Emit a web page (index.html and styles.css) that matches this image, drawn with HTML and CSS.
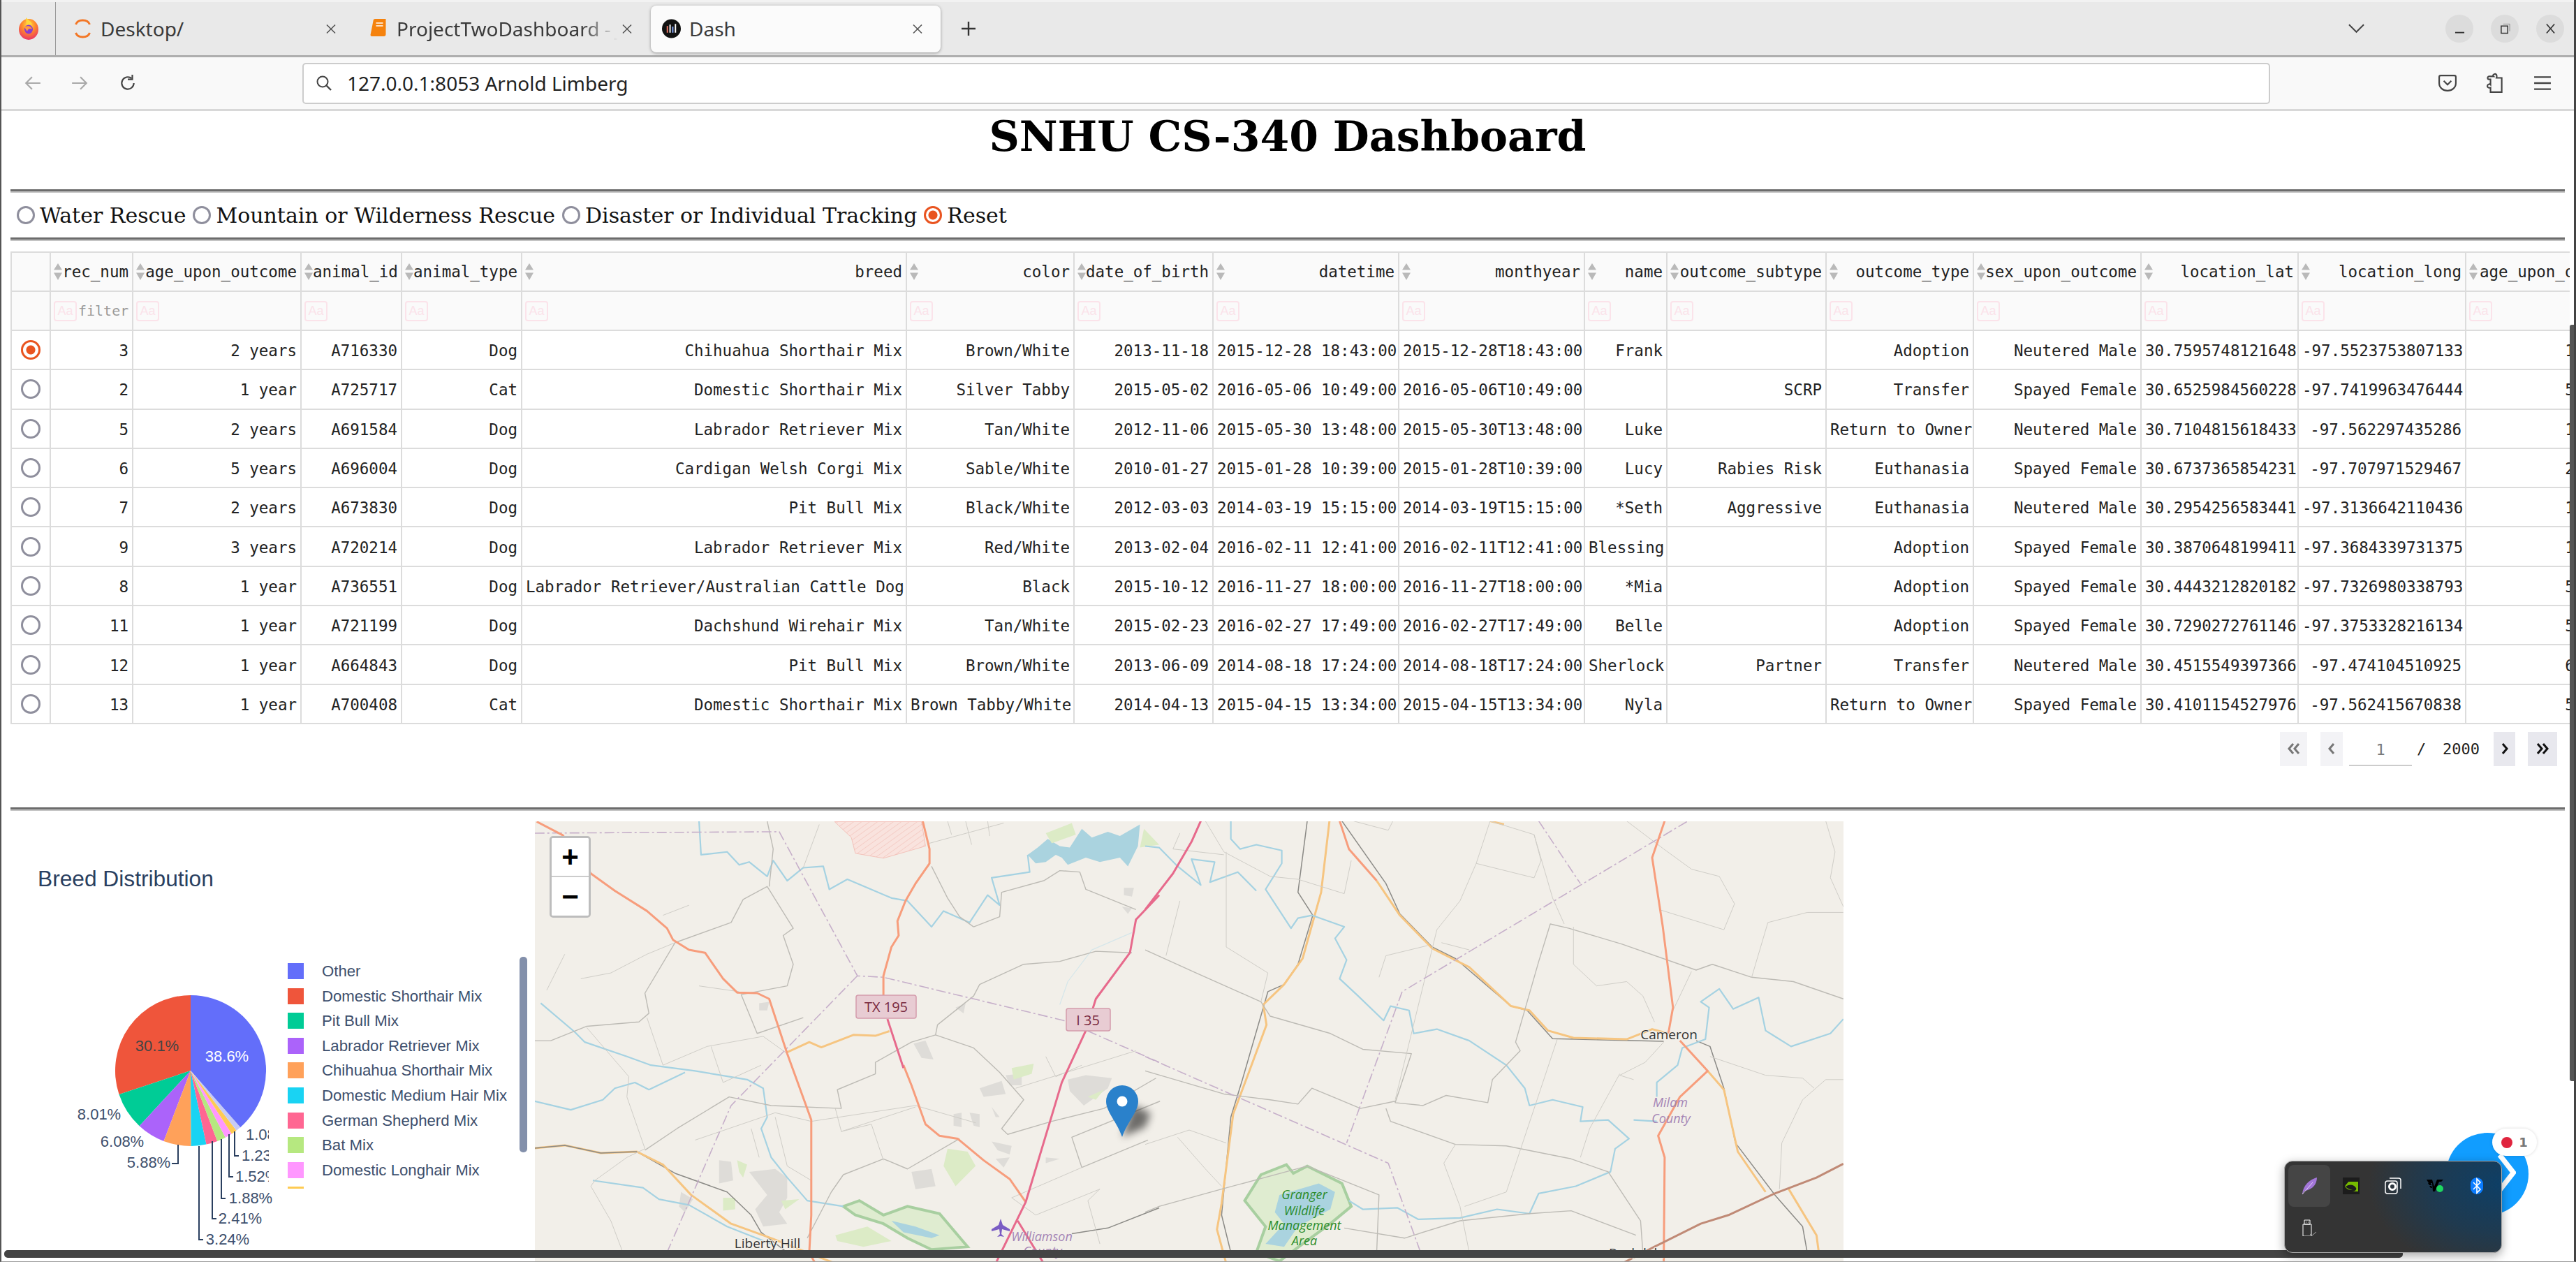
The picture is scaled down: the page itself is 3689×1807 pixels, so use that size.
FILE: index.html
```html
<!DOCTYPE html>
<html lang="en">
<head>
<meta charset="utf-8">
<title>Dash</title>
<link rel="stylesheet" href="styles.css">
</head>
<body>
<div class="window">
  <header class="tabbar">
    <div class="ff-cell">
      <svg class="ico-ff" viewBox="0 0 30 32"><defs><radialGradient id="ffg" cx="50%" cy="30%" r="75%"><stop offset="0" stop-color="#ffe14d"/><stop offset=".45" stop-color="#ff8a2b"/><stop offset="1" stop-color="#e8286e"/></radialGradient></defs><ellipse cx="15" cy="17" rx="14" ry="15" fill="url(#ffg)"/><path d="M11 0c3 3 8 6 9 10l-8 1z" fill="#ffd83a"/><ellipse cx="15" cy="17" rx="6" ry="6.5" fill="#8a3bd0"/><path d="M9 14c4-3 10-2 11 3-3-2-6-1-7 3z" fill="#ff9a3d"/></svg>
    </div>
    <div class="tab tab-a">
      <svg class="ico-tab" viewBox="0 0 26 30"><path d="M3 9C6 1 20 1 23 9" fill="none" stroke="#f37726" stroke-width="3"/><path d="M3 21c3 8 17 8 20 0" fill="none" stroke="#f37726" stroke-width="3"/></svg>
      <span class="tab-title">Desktop/</span>
      <svg class="ico-x" viewBox="0 0 14 14"><path d="M1 1l12 12M13 1L1 13" stroke="#555" stroke-width="1.6"/></svg>
    </div>
    <div class="tab tab-b">
      <svg class="ico-tab" viewBox="0 0 26 30"><path d="M5 4q0-3 3-3h15v22q0 3-3 3H3q-2 0 -2-2z" fill="#f5820d"/><path d="M9 7h10M9 11h10" stroke="#fff" stroke-width="1.6"/></svg>
      <span class="tab-title tab-fade">ProjectTwoDashboard - JupyterLab</span>
      <svg class="ico-x" viewBox="0 0 14 14"><path d="M1 1l12 12M13 1L1 13" stroke="#555" stroke-width="1.6"/></svg>
    </div>
    <div class="tab tab-c">
      <svg class="ico-tab" viewBox="0 0 28 30"><circle cx="14" cy="15" r="14" fill="#111"/><path d="M8 11v10" stroke="#e76" stroke-width="2"/><path d="M12 9v12" stroke="#fff" stroke-width="2"/><path d="M16 12v9" stroke="#8af" stroke-width="2"/><path d="M20 8v13" stroke="#fff" stroke-width="2"/></svg>
      <span class="tab-title">Dash</span>
      <svg class="ico-x" viewBox="0 0 14 14"><path d="M1 1l12 12M13 1L1 13" stroke="#555" stroke-width="1.6"/></svg>
    </div>
    <svg class="ico-plus" viewBox="0 0 24 24"><path d="M12 2v20M2 12h20" stroke="#333" stroke-width="2.4"/></svg>
    <svg class="ico-chev" viewBox="0 0 24 14"><path d="M1 1l11 11L23 1" fill="none" stroke="#444" stroke-width="2"/></svg>
    <div class="winbtn winbtn-first"><svg viewBox="0 0 16 16"><path d="M1 14h14" stroke="#333" stroke-width="2"/></svg></div>
    <div class="winbtn"><svg viewBox="0 0 16 16"><rect x="2" y="4" width="10" height="11" fill="none" stroke="#333" stroke-width="1.6"/><path d="M5 1h10v11" fill="none" stroke="#888" stroke-width="1"/></svg></div>
    <div class="winbtn"><svg viewBox="0 0 16 16"><path d="M2 1l12 14M14 1L2 15" stroke="#333" stroke-width="1.8"/></svg></div>
  </header>

  <nav class="navbar">
    <svg class="ico-nav nav-back" viewBox="0 0 24 24"><path d="M22 12H3M11 4l-8 8 8 8" fill="none" stroke="#a9a9a9" stroke-width="2"/></svg>
    <svg class="ico-nav nav-fwd" viewBox="0 0 24 24"><path d="M2 12h19M13 4l8 8-8 8" fill="none" stroke="#a9a9a9" stroke-width="2"/></svg>
    <svg class="ico-nav nav-reload" viewBox="0 0 24 24"><path d="M20 12a8 8 0 1 1-3-6.3" fill="none" stroke="#444" stroke-width="2"/><path d="M18 1v6h-6" fill="none" stroke="#444" stroke-width="2"/></svg>
    <div class="urlbar">
      <svg class="ico-search" viewBox="0 0 24 24"><circle cx="10" cy="10" r="7.5" fill="none" stroke="#444" stroke-width="2"/><path d="M15.5 15.5L22 22" stroke="#444" stroke-width="2.4"/></svg>
      <span class="url-text">127.0.0.1:8053 Arnold Limberg</span>
    </div>
    <svg class="ico-nav nav-pocket" viewBox="0 0 24 24"><path d="M3 2h18q2 0 2 2v8c0 6-5 10-11 10S1 18 1 12V4q0-2 2-2z" fill="none" stroke="#444" stroke-width="2"/><path d="M7 9l5 5 5-5" fill="none" stroke="#444" stroke-width="2"/></svg>
    <svg class="ico-nav nav-puzzle" viewBox="0 0 24 28"><path d="M11 2c3-1 4 2 3 5h7v19H6v-6c-3 1-5-1-4-3s3-2 4-1v-7h-2c-3 0-2-5 1-4h5c-1-1-1-2 1-3z" fill="none" stroke="#444" stroke-width="2"/></svg>
    <svg class="ico-nav nav-menu" viewBox="0 0 24 24"><path d="M1 4h22M1 12h22M1 20h22" stroke="#444" stroke-width="2.2"/></svg>
  </nav>

  <main class="page">
    <h1 class="title">SNHU CS-340 Dashboard</h1>
    <hr class="rule rule-top">
    <div class="radios">
      <label class="radio-item"><input class="radio" type="radio" name="filter"><span>Water Rescue</span></label>
      <label class="radio-item"><input class="radio" type="radio" name="filter"><span>Mountain or Wilderness Rescue</span></label>
      <label class="radio-item"><input class="radio" type="radio" name="filter"><span>Disaster or Individual Tracking</span></label>
      <label class="radio-item"><input class="radio" type="radio" name="filter" checked><span>Reset</span></label>
    </div>
    <hr class="rule">

    <div class="table-wrap">
      <table class="grid">
        <thead>
          <tr class="head">
            <th></th>
            <th><div class="th"><i class="sort"></i><span>rec_num</span></div></th>
            <th><div class="th"><i class="sort"></i><span>age_upon_outcome</span></div></th>
            <th><div class="th"><i class="sort"></i><span>animal_id</span></div></th>
            <th><div class="th"><i class="sort"></i><span>animal_type</span></div></th>
            <th><div class="th"><i class="sort"></i><span>breed</span></div></th>
            <th><div class="th"><i class="sort"></i><span>color</span></div></th>
            <th><div class="th"><i class="sort"></i><span>date_of_birth</span></div></th>
            <th><div class="th"><i class="sort"></i><span>datetime</span></div></th>
            <th><div class="th"><i class="sort"></i><span>monthyear</span></div></th>
            <th><div class="th"><i class="sort"></i><span>name</span></div></th>
            <th><div class="th"><i class="sort"></i><span>outcome_subtype</span></div></th>
            <th><div class="th"><i class="sort"></i><span>outcome_type</span></div></th>
            <th><div class="th"><i class="sort"></i><span>sex_upon_outcome</span></div></th>
            <th><div class="th"><i class="sort"></i><span>location_lat</span></div></th>
            <th><div class="th"><i class="sort"></i><span>location_long</span></div></th>
            <th><div class="th th-last"><i class="sort"></i><span>age_upon_outcome_in_weeks</span></div></th>
          </tr>
          <tr class="filters">
            <th></th>
            <th><div class="fl"><b class="aa">Aa</b><span class="ph">filter</span></div></th>
            <th><div class="fl"><b class="aa">Aa</b></div></th>
            <th><div class="fl"><b class="aa">Aa</b></div></th>
            <th><div class="fl"><b class="aa">Aa</b></div></th>
            <th><div class="fl"><b class="aa">Aa</b></div></th>
            <th><div class="fl"><b class="aa">Aa</b></div></th>
            <th><div class="fl"><b class="aa">Aa</b></div></th>
            <th><div class="fl"><b class="aa">Aa</b></div></th>
            <th><div class="fl"><b class="aa">Aa</b></div></th>
            <th><div class="fl"><b class="aa">Aa</b></div></th>
            <th><div class="fl"><b class="aa">Aa</b></div></th>
            <th><div class="fl"><b class="aa">Aa</b></div></th>
            <th><div class="fl"><b class="aa">Aa</b></div></th>
            <th><div class="fl"><b class="aa">Aa</b></div></th>
            <th><div class="fl"><b class="aa">Aa</b></div></th>
            <th><div class="fl"><b class="aa">Aa</b></div></th>
          </tr>
        </thead>
        <tbody>
          <tr><td class="sel"><input class="radio" type="radio" name="row" checked></td><td>3</td><td>2 years</td><td>A716330</td><td>Dog</td><td>Chihuahua Shorthair Mix</td><td>Brown/White</td><td>2013-11-18</td><td>2015-12-28 18:43:00</td><td>2015-12-28T18:43:00</td><td>Frank</td><td></td><td>Adoption</td><td>Neutered Male</td><td>30.7595748121648</td><td>-97.5523753807133</td><td>110.571428571429</td></tr>
          <tr><td class="sel"><input class="radio" type="radio" name="row"></td><td>2</td><td>1 year</td><td>A725717</td><td>Cat</td><td>Domestic Shorthair Mix</td><td>Silver Tabby</td><td>2015-05-02</td><td>2016-05-06 10:49:00</td><td>2016-05-06T10:49:00</td><td></td><td>SCRP</td><td>Transfer</td><td>Spayed Female</td><td>30.6525984560228</td><td>-97.7419963476444</td><td>53.2857142857143</td></tr>
          <tr><td class="sel"><input class="radio" type="radio" name="row"></td><td>5</td><td>2 years</td><td>A691584</td><td>Dog</td><td>Labrador Retriever Mix</td><td>Tan/White</td><td>2012-11-06</td><td>2015-05-30 13:48:00</td><td>2015-05-30T13:48:00</td><td>Luke</td><td></td><td>Return to Owner</td><td>Neutered Male</td><td>30.7104815618433</td><td>-97.562297435286</td><td>133.142857142857</td></tr>
          <tr><td class="sel"><input class="radio" type="radio" name="row"></td><td>6</td><td>5 years</td><td>A696004</td><td>Dog</td><td>Cardigan Welsh Corgi Mix</td><td>Sable/White</td><td>2010-01-27</td><td>2015-01-28 10:39:00</td><td>2015-01-28T10:39:00</td><td>Lucy</td><td>Rabies Risk</td><td>Euthanasia</td><td>Spayed Female</td><td>30.6737365854231</td><td>-97.707971529467</td><td>261.142857142857</td></tr>
          <tr><td class="sel"><input class="radio" type="radio" name="row"></td><td>7</td><td>2 years</td><td>A673830</td><td>Dog</td><td>Pit Bull Mix</td><td>Black/White</td><td>2012-03-03</td><td>2014-03-19 15:15:00</td><td>2014-03-19T15:15:00</td><td>*Seth</td><td>Aggressive</td><td>Euthanasia</td><td>Neutered Male</td><td>30.2954256583441</td><td>-97.3136642110436</td><td>106.714285714286</td></tr>
          <tr><td class="sel"><input class="radio" type="radio" name="row"></td><td>9</td><td>3 years</td><td>A720214</td><td>Dog</td><td>Labrador Retriever Mix</td><td>Red/White</td><td>2013-02-04</td><td>2016-02-11 12:41:00</td><td>2016-02-11T12:41:00</td><td>Blessing</td><td></td><td>Adoption</td><td>Spayed Female</td><td>30.3870648199411</td><td>-97.3684339731375</td><td>157.285714285714</td></tr>
          <tr><td class="sel"><input class="radio" type="radio" name="row"></td><td>8</td><td>1 year</td><td>A736551</td><td>Dog</td><td>Labrador Retriever/Australian Cattle Dog</td><td>Black</td><td>2015-10-12</td><td>2016-11-27 18:00:00</td><td>2016-11-27T18:00:00</td><td>*Mia</td><td></td><td>Adoption</td><td>Spayed Female</td><td>30.4443212820182</td><td>-97.7326980338793</td><td>58.7142857142857</td></tr>
          <tr><td class="sel"><input class="radio" type="radio" name="row"></td><td>11</td><td>1 year</td><td>A721199</td><td>Dog</td><td>Dachshund Wirehair Mix</td><td>Tan/White</td><td>2015-02-23</td><td>2016-02-27 17:49:00</td><td>2016-02-27T17:49:00</td><td>Belle</td><td></td><td>Adoption</td><td>Spayed Female</td><td>30.7290272761146</td><td>-97.3753328216134</td><td>52.8571428571429</td></tr>
          <tr><td class="sel"><input class="radio" type="radio" name="row"></td><td>12</td><td>1 year</td><td>A664843</td><td>Dog</td><td>Pit Bull Mix</td><td>Brown/White</td><td>2013-06-09</td><td>2014-08-18 17:24:00</td><td>2014-08-18T17:24:00</td><td>Sherlock</td><td>Partner</td><td>Transfer</td><td>Neutered Male</td><td>30.4515549397366</td><td>-97.474104510925</td><td>62.1428571428571</td></tr>
          <tr><td class="sel"><input class="radio" type="radio" name="row"></td><td>13</td><td>1 year</td><td>A700408</td><td>Cat</td><td>Domestic Shorthair Mix</td><td>Brown Tabby/White</td><td>2014-04-13</td><td>2015-04-15 13:34:00</td><td>2015-04-15T13:34:00</td><td>Nyla</td><td></td><td>Return to Owner</td><td>Spayed Female</td><td>30.4101154527976</td><td>-97.562415670838</td><td>52.4285714285714</td></tr>
        </tbody>
      </table>
    </div>

    <div class="pager">
      <button class="pg pg-first off"><svg viewBox="0 0 20 16"><path d="M9 1L3 8l6 7M17 1l-6 7 6 7" fill="none" stroke="#777" stroke-width="3"/></svg></button>
      <button class="pg pg-prev off"><svg viewBox="0 0 12 16"><path d="M9 1L3 8l6 7" fill="none" stroke="#777" stroke-width="3"/></svg></button>
      <span class="pg-current">1</span>
      <span class="pg-sep">/</span>
      <span class="pg-total">2000</span>
      <button class="pg pg-next"><svg viewBox="0 0 12 16"><path d="M3 1l6 7-6 7" fill="none" stroke="#111" stroke-width="3"/></svg></button>
      <button class="pg pg-last"><svg viewBox="0 0 20 16"><path d="M3 1l6 7-6 7M11 1l6 7-6 7" fill="none" stroke="#111" stroke-width="3"/></svg></button>
    </div>

    <hr class="rule rule-bottom">

    <section class="charts">
      <svg class="pie" viewBox="2 1174 764 633">
        <defs><clipPath id="lblclip"><rect x="0" y="1174" width="385" height="633"/></clipPath></defs>
        <text class="pie-title" x="54" y="1267">Breed Distribution</text>
        <g transform="translate(273 1531)">
          <path d="M0 0L0 -108A108 108 0 0 1 70.9 81.5Z" fill="#636efa"/>
          <path d="M0 0L0 -108A108 108 0 0 0 -102.5 34.1Z" fill="#ef553b"/>
          <path d="M0 0L-102.5 34.1A108 108 0 0 0 -73.4 79.2Z" fill="#00cc96"/>
          <path d="M0 0L-73.4 79.2A108 108 0 0 0 -38.5 100.9Z" fill="#ab63fa"/>
          <path d="M0 0L-38.5 100.9A108 108 0 0 0 .6 108Z" fill="#ffa15a"/>
          <path d="M0 0L.6 108A108 108 0 0 0 22.5 105.6Z" fill="#19d3f3"/>
          <path d="M0 0L22.5 105.6A108 108 0 0 0 38.2 101Z" fill="#ff6692"/>
          <path d="M0 0L38.2 101A108 108 0 0 0 49.9 95.8Z" fill="#b6e880"/>
          <path d="M0 0L49.9 95.8A108 108 0 0 0 58.8 90.6Z" fill="#ff97ff"/>
          <path d="M0 0L58.8 90.6A108 108 0 0 0 65.6 85.8Z" fill="#fecb52"/>
          <path d="M0 0L65.6 85.8A108 108 0 0 0 71.3 81.1Z" fill="#c6cbf5"/>
        </g>
        <text class="pie-in pie-in-w" x="325" y="1518">38.6%</text>
        <text class="pie-in" x="225" y="1503">30.1%</text>
        <text class="pie-out" x="142" y="1601">8.01%</text>
        <text class="pie-out" x="175" y="1640">6.08%</text>
        <text class="pie-out" x="213" y="1670">5.88%</text>
        <text class="pie-out" x="326" y="1780">3.24%</text>
        <text class="pie-out" x="344" y="1750">2.41%</text>
        <text class="pie-out" x="359" y="1721">1.88%</text>
        <g clip-path="url(#lblclip)">
          <text class="pie-out pie-left" x="337" y="1690">1.52%</text>
          <text class="pie-out pie-left" x="346" y="1660">1.23%</text>
          <text class="pie-out pie-left" x="352" y="1630">1.08%</text>
        </g>
        <path class="lead" d="M255 1637V1664H246M285 1639V1773H291M304 1632V1743H310M317 1629V1714H323M328 1622V1683H334M336 1618V1653H342"/>
        <rect x="412" y="1377" width="23" height="23" fill="#636efa"/><text class="lg" x="461" y="1396">Other</text>
        <rect x="412" y="1413" width="23" height="23" fill="#ef553b"/><text class="lg" x="461" y="1432">Domestic Shorthair Mix</text>
        <rect x="412" y="1448" width="23" height="23" fill="#00cc96"/><text class="lg" x="461" y="1467">Pit Bull Mix</text>
        <rect x="412" y="1484" width="23" height="23" fill="#ab63fa"/><text class="lg" x="461" y="1503">Labrador Retriever Mix</text>
        <rect x="412" y="1519" width="23" height="23" fill="#ffa15a"/><text class="lg" x="461" y="1538">Chihuahua Shorthair Mix</text>
        <rect x="412" y="1555" width="23" height="23" fill="#19d3f3"/><text class="lg" x="461" y="1574">Domestic Medium Hair Mix</text>
        <rect x="412" y="1591" width="23" height="23" fill="#ff6692"/><text class="lg" x="461" y="1610">German Shepherd Mix</text>
        <rect x="412" y="1626" width="23" height="23" fill="#b6e880"/><text class="lg" x="461" y="1645">Bat Mix</text>
        <rect x="412" y="1662" width="23" height="23" fill="#ff97ff"/><text class="lg" x="461" y="1681">Domestic Longhair Mix</text>
        <rect x="412" y="1697" width="23" height="3" fill="#fecb52"/>
        <rect x="744" y="1368" width="11" height="280" rx="5" fill="#8390ab"/>
      </svg>

      <div class="map-wrap">
        <svg class="map" viewBox="766 1174 1874 633">
          <defs>
            <pattern id="hatch" width="14" height="14" patternUnits="userSpaceOnUse" patternTransform="rotate(-45)"><rect width="14" height="14" fill="#f9e3de"/><path d="M0 7h14" stroke="#f3c5bd" stroke-width="1.5"/></pattern>
            <filter id="sh" x="-50%" y="-50%" width="200%" height="200%"><feGaussianBlur stdDeviation="6"/></filter>
            <clipPath id="leftclip"><rect x="766" y="1174" width="914" height="633"/></clipPath>
          </defs>
          <rect x="766" y="1174" width="1874" height="633" fill="#f2efe9"/>
          <g clip-path="url(#leftclip)"><g transform="translate(760 1160) scale(.574 .4127)">
            <path class="m-hatch" d="M758 35L975 35 985 120 880 162 810 145 800 90Z"/>
            <path class="m-water" d="M1240 150L1265 125 1290 95 1320 120 1345 125 1375 60 1400 90 1440 70 1470 85 1520 45 1515 120 1490 190 1470 160 1420 175 1385 160 1340 185 1325 160 1310 150 1285 175 1260 180Z"/>
            <path class="m-park" d="M1285 75L1350 40 1360 80 1300 110ZM1520 125L1568 115 1530 60Z"/>
            <path class="m-urban" d="M955 805L985 795 1005 860 975 855ZM1120 960L1175 935 1185 980 1130 990ZM1185 915L1225 910 1225 950 1195 950ZM1340 930L1385 915 1450 925 1440 960 1380 1020 1345 970ZM1055 1050L1075 1045 1075 1095 1055 1090ZM1095 1045L1120 1050 1120 1095 1105 1090ZM1150 1025L1170 1060 1160 1060ZM1150 1145L1200 1160 1195 1190 1165 1175ZM1160 1205L1195 1200 1180 1235ZM950 1250L1000 1240 1010 1300 960 1310ZM470 1210L500 1215 505 1280 470 1290ZM545 1250L610 1240 640 1270 640 1340 620 1390 640 1430 580 1440 560 1380 590 1330ZM1480 265L1505 265 1500 295 1480 290ZM1475 330L1500 335 1490 355ZM570 665L595 660 590 690 570 690ZM1060 680L1085 665 1080 700ZM375 1320L405 1345 385 1390 370 1370ZM1285 1200L1320 1205 1285 1220Z"/>
            <path class="m-park" d="M1200 890L1255 875 1250 910 1205 930ZM1390 990L1430 965 1410 1000ZM1040 1170L1090 1180 1110 1230 1060 1300 1030 1230ZM515 1210L540 1225 530 1270 520 1250ZM760 1470L840 1440 900 1490 830 1510 765 1490ZM480 1340L510 1340 510 1380 480 1385ZM625 1350L670 1345 635 1380Z"/>
            <path class="m-forest" d="M780 1370L820 1350 880 1400 940 1370 1020 1395 1090 1510 1000 1520 940 1480 880 1430 810 1400Z"/>
            <path class="m-water" d="M900 1420L960 1440 1020 1470 1000 1480 930 1460Z"/>
            <path class="rl" d="M265 1180L360 1255 490 1320 550 1400 575 1460 640 1530M1350 1465L1440 1445 1568 1375"/>
            <path class="rd-y" d="M640 835L695 800 725 818 805 775 860 778 895 762M10 1168L85 1158 175 1185 265 1180 330 1225 400 1330 500 1430 600 1480 690 1530 760 1568"/>
            <path class="rl" d="M10 1168L85 1158 175 1185 265 1180"/>
            <path class="rv" d="M420 33L425 150 490 140 520 185 545 175 590 225 605 170 640 240 680 195 730 190 745 270 790 235 900 300 940 310 1000 400 1030 345 1095 385 1140 290 1170 325 1150 230 1245 210 1240 150M25 665L110 765 135 800 240 850 300 880 410 900 540 930 580 960 590 1060 575 1100 600 1200 640 1270 690 1350 780 1370M10 1005L100 1035 180 1000 210 960 260 940 295 965 385 905M155 1280L280 1305 320 1345 395 1365 490 1440 600 1500"/>
            <path class="rv-l" d="M1500 420L1400 480 1340 590 1320 670"/>
            <path class="rd-g" d="M10 795L50 795 140 745 270 730 295 700 285 630 360 455 500 385 530 305 590 260 655 405 630 430 655 530 640 605 525 635 565 770 680 715M590 33L605 130 595 260M285 1175L365 1100 495 990 600 1020 775 1030 765 965 860 910 860 870 950 800 1010 775 1105 820 1170 905 1230 1000 1175 1100 1190 1120 1300 1075 1430 1030 1560 925M1010 775L1015 740 1105 640 1120 600 1230 530 1320 520 1410 485 1500 490M1105 400L1070 365 1040 300 1000 190M1105 400L1170 365 1175 280 1280 240 1320 205 1370 210 1385 270 1510 340M880 1205L780 1260 750 1320 690 1480M880 1205L940 1240 1070 1135M1375 1235L1540 1140M1375 1235L1350 1130 1570 1005"/>
            <path class="rd-l" d="M140 750L245 920 240 990 285 1170 240 1200 160 1280 150 1300 200 1420 230 1530M330 880L440 815 580 780 640 840M410 1140L610 1045 700 1075 960 1020 1110 1080M775 1110L960 1025M995 110L1180 40M1100 115L1085 33M1040 33L1050 80M1140 33L1145 85M680 195L720 45M880 1210L850 1085 775 1110 760 1030M1375 1235L1200 1340 1260 1400 1420 1310 1390 1350 1420 1500M1210 960L1510 830M1285 850L1310 920 1375 880M610 1060L640 1230 700 1280M550 1100L570 1200M125 580L200 560 290 495 360 455M40 620L85 495M420 605L520 625M330 360L395 325M330 880L290 715M450 815L480 940 575 880"/>
            <path class="bd" d="M10 75L620 70 815 570 880 575 1330 725 1568 870M815 570L500 1020 340 1530"/>
            <path class="rd-o" d="M15 35L80 82 150 215 210 275 290 345 340 405 355 445 395 480 435 490 480 580 515 628 565 630 595 650 640 840 700 1070 700 1400 695 1530 710 1568M978 33L995 130 995 180 960 250 935 310 915 380 918 430 900 470 880 570 880 640M930 880L950 950 985 1085 1020 1125 1065 1135 1130 1210 1195 1275 1235 1355"/>
            <path class="rd-p" d="M890 720L930 890M1568 290L1510 375 1495 490 1410 650 1385 760 1325 940 1235 1355 1160 1568M1215 1420L1280 1568"/>
          </g></g>
          <g transform="translate(1640 1160) scale(.663 .4127)">
            <path class="m-forest" d="M250 1260L305 1225 320 1255 350 1230 425 1290 445 1370 400 1430 340 1500 290 1560 240 1530 260 1440 215 1350Z"/>
            <path class="m-water" d="M290 1330L375 1290 410 1320 400 1380 330 1440 300 1510 260 1500 300 1430 280 1390Z"/>
            <path class="rl" d="M425 33L520 250 550 355 620 470 670 510 790 675 825 690 880 788 1120 797M350 33L330 280 362 360 330 530 300 600 265 625 210 930 185 1060 165 1400 185 1530M1190 795L1220 815 1250 960 1275 1150 1360 1330 1420 1440 1430 1530"/>
            <path class="rd-y" d="M500 240L550 360 620 475 700 540 790 675 830 690 870 760 925 785 1040 790 1095 755 1130 770M398 33L380 280 340 510 300 600 255 670 262 740 225 900 190 1050 165 1360 155 1450 175 1568M1215 900L1250 965 1280 1180 1340 1320M1390 1310L1450 1470 1455 1530M745 33L775 45"/>
            <path class="rv" d="M185 33L185 95 205 130 240 115 295 135 295 180 260 270 315 405 330 370 360 360 430 400 410 440 435 515 420 580 460 640 515 725 530 675 570 690 580 770 630 755 700 795 780 880 820 960 830 1020 880 1000 945 1025 940 1075 1000 1070 1045 1135 1015 1170 1005 1250 930 1300 850 1325 830 1395 760 1380 680 1410 590 1415 545 1375 470 1380 440 1350M0 120L30 125 70 190 120 255 100 165 150 175 140 245 200 210 240 275M1105 990L1105 940 1150 880 1160 820 1210 790 1218 680 1200 660 1240 615 1270 685 1325 645 1340 760 1395 815 1480 770 1508 720M1055 1070L1105 1075"/>
            <path class="rd-g" d="M0 480L110 560 250 660 270 710 400 770 470 825 575 840 540 1010 600 1020 650 985 740 1010 750 930 810 830 800 800 850 520 875 390 915 405 1030 460 1190 550 1225 530 1310 575 1400 590 1508 650M540 1005L465 1030 420 1000 360 960 330 1015 270 1000 170 980 0 900M520 1030L530 1075 670 1155 780 1160 920 1205 1000 1250 1070 1420 1075 1530M0 1390L30 1370 165 1310 350 1230 505 1330 500 1530M430 1445L560 1480 680 1420 830 1395 920 1385 1060 1470"/>
            <path class="rd-l" d="M670 1155L645 1220 680 1370 700 1530M745 33L715 180 680 310 630 410 540 1000M640 455L700 480M715 180L840 230 855 170 840 80 745 33M840 80L880 300 905 390M1040 33L1120 130 1180 200 1240 225 1273 320 1250 410 1110 340M890 790L780 1320 690 1370M1025 910L960 1100 940 1200M1180 555L1140 690M1120 800L1080 870 1025 915 1055 930M1470 33L1490 140 1480 230 1508 330M1508 350L1430 350 1345 385 1310 575M1508 930L1470 930 1420 1000 1375 1150 1370 1310M1220 850L1340 915 1420 925 1445 960M925 400L925 530 975 605 1040 590 1075 640 1100 730M450 33L525 65 535 33M130 33L170 140 270 225 330 235 430 285 445 170M175 140L175 470 265 560 250 660M75 75L60 130 170 150M75 310L45 500M95 1105L0 1155M95 1105L175 1150M70 1130L130 1240 165 1300M505 575L520 500 610 465"/>
            <path class="bd" d="M850 33L940 250M1170 35L555 625 435 1150M0 850L525 1220 595 1530"/>
            <path class="rd-o" d="M1122 33L1095 160 1118 400 1140 680 1130 770M1155 795L1215 900 1155 990 1108 1125 1122 1200 1120 1568M420 33L440 130 500 240"/>
            <path class="rd-b" d="M1508 1222L1450 1270 1360 1325 1260 1400 1200 1430 1100 1510 1030 1568"/>
            <path class="rd-p" d="M120 33L100 105 60 215 0 340"/>
          </g>
          <rect class="shield" x="1226" y="1423" width="86" height="33" rx="3"/>
          <text class="shield-t" x="1269" y="1447">TX 195</text>
          <rect class="shield" x="1527" y="1442" width="63" height="32" rx="3"/>
          <text class="shield-t" x="1558" y="1466">I 35</text>
          <text class="m-place" x="1099" y="1785">Liberty Hill</text>
          <text class="m-place" x="2390" y="1486">Cameron</text>
          <text class="m-place" x="2344" y="1799">Rockdale</text>
          <text class="m-county" x="1492" y="1775">Williamson</text>
          <text class="m-county" x="1493" y="1796">County</text>
          <text class="m-county" x="2392" y="1583">Milam</text>
          <text class="m-county" x="2393" y="1606">County</text>
          <text class="m-wild" x="1868" y="1715">Granger</text>
          <text class="m-wild" x="1868" y="1738">Wildlife</text>
          <text class="m-wild" x="1868" y="1759">Management</text>
          <text class="m-wild" x="1868" y="1781">Area</text>
          <path d="M1433 1743L1436 1752 1446 1758 1446 1761 1435 1758 1434 1765 1438 1769 1433 1768 1428 1769 1432 1765 1431 1758 1420 1761 1420 1758 1430 1752Z" fill="#7a5cc4"/>
          <path d="M1607 1626L1622 1580 1648 1592 1640 1612Z" fill="#000" opacity=".55" filter="url(#sh)"/>
          <path d="M1607 1626C1600 1605 1584 1590 1584 1575A23 23 0 1 1 1630 1575C1630 1590 1614 1605 1607 1626Z" fill="#2a81cb"/>
          <circle cx="1607" cy="1575" r="7.5" fill="#fff"/>
        </svg>
        <div class="zoomctl">
          <button class="zoom-b zoom-in">+</button>
          <button class="zoom-b">&#8722;</button>
        </div>
      </div>
    </section>
  </main>

  <div class="vscroll"></div>
  <div class="hscroll"></div>

  <div class="bubble"><svg class="bubble-chev" viewBox="0 0 30 64"><path d="M4 4l22 28L4 60" fill="none" stroke="#fff" stroke-width="8"/></svg></div>
  <div class="badge"><i class="badge-dot"></i><span>1</span></div>

  <div class="tray">
    <div class="tray-cell tray-on"><svg class="tray-ico" viewBox="0 0 24 24"><path d="M2 24C3 12 12 3 23 0c0 6-3 13-9 16-3 2-7 3-9 3z" fill="#a276d8"/><path d="M2 24L17 7" stroke="#e3d2f5" stroke-width="1"/></svg></div>
    <div class="tray-cell"><svg class="tray-ico" viewBox="0 0 24 24"><rect width="24" height="24" fill="#1c1c1c"/><path d="M8 6h14v14H14c4 0 6-3 5-5-3-5-9-6-15-2 3 3 7 5 11 4-5 2-9 0-12-4 2-4 5-6 5-7z" fill="#76b900"/></svg></div>
    <div class="tray-cell"><svg class="tray-ico" viewBox="0 0 24 24"><rect x="1" y="5" width="17" height="18" rx="3" fill="none" stroke="#fff" stroke-width="1.5"/><path d="M7 1h13q3 0 3 3v12" fill="none" stroke="#fff" stroke-width="1.5"/><circle cx="11" cy="13" r="4.5" fill="none" stroke="#fff" stroke-width="3"/></svg></div>
    <div class="tray-cell"><svg class="tray-ico" viewBox="0 0 24 24"><path d="M0 3h8l3 10 4-10h9l-3 3h-3l-6 14h-3L8 8H3zM2 8h4l1 3H4zM4 12h3l1 3H6z" fill="#000"/><circle cx="19" cy="16" r="5" fill="#1ed760"/></svg></div>
    <div class="tray-cell"><svg class="tray-ico tray-bt" viewBox="0 0 18 24"><rect width="18" height="24" rx="9" fill="#0a7cff"/><path d="M4 7l10 10-5 5V2l5 5L4 17" fill="none" stroke="#fff" stroke-width="1.6"/></svg></div>
    <div class="tray-cell"><svg class="tray-ico" viewBox="0 0 24 24"><path d="M3 7h12v17H3zM5 1h8v6H5z" fill="none" stroke="#fff" stroke-width="1"/><path d="M7 4h1M10 4h1" stroke="#fff"/><path d="M13 21l3 2 6-5" fill="none" stroke="#aaa" stroke-width="1"/></svg></div>
  </div>
</div>
</body>
</html>
```

FILE: styles.css
```css
* { box-sizing: border-box; }
html, body { margin: 0; padding: 0; background: #fff; }
.window { position: relative; width: 3689px; height: 1807px; overflow: hidden; background: #fff; border-left: 2px solid #555; border-right: 3px solid #444; border-bottom: 1px solid #999; }

.tabbar { display: flex; align-items: center; height: 82px; background: #e9e9e9; border-top: 3px solid #f2f2f2; border-bottom: 3px solid #aeaeae; font-family: "Noto Sans", sans-serif; color: #3a3a3a; font-size: 28px; }
.ff-cell { width: 78px; height: 100%; display: flex; align-items: center; justify-content: center; border-right: 1px solid #999; padding-right: 0; }
.ico-ff { width: 30px; height: 32px; }
.tab { display: flex; align-items: center; height: 67px; }
.tab-a { width: 425px; padding: 0 24px 0 25px; }
.tab-b { width: 427px; padding: 0 27px 0 24px; }
.tab-c { width: 415px; padding: 0 26px 0 16px; background: #fbfbfb; border-radius: 8px; box-shadow: 0 1px 4px rgba(0,0,0,.35); }
.ico-tab { width: 27px; height: 30px; flex: none; margin-right: 12px; }
.tab-title { flex: 1; overflow: hidden; white-space: nowrap; }
.tab-fade { -webkit-mask-image: linear-gradient(90deg, #000 82%, transparent 98%); mask-image: linear-gradient(90deg, #000 82%, transparent 98%); }
.ico-x { width: 14px; height: 15px; flex: none; }
.ico-plus { width: 24px; height: 24px; margin-left: 28px; }
.ico-chev { width: 23px; height: 14px; margin-left: auto; }
.winbtn { width: 40px; height: 40px; border-radius: 50%; background: #dcdcdc; display: flex; align-items: center; justify-content: center; margin-left: 25px; }
.winbtn svg { width: 15px; height: 16px; }
.winbtn-first { margin-left: 116px; }
.winbtn:last-child { margin-right: 14px; }

.navbar { display: flex; align-items: center; height: 77px; background: #f9f9f9; border-bottom: 3px solid #d8d8d8; font-family: "Noto Sans", sans-serif; }
.ico-nav { width: 26px; height: 26px; flex: none; }
.nav-back { margin-left: 32px; }
.nav-fwd { margin-left: 41px; }
.nav-reload { margin-left: 43px; }
.urlbar { display: flex; align-items: center; width: 2818px; height: 59px; margin-left: 237px; background: #fff; border: 2px solid #ccc; border-radius: 5px; padding-left: 17px; }
.ico-search { width: 24px; height: 26px; flex: none; }
.url-text { margin-left: 21px; font-size: 28px; color: #1f1f1f; }
.nav-pocket { margin-left: 241px; width: 26px; height: 26px; }
.nav-puzzle { margin-left: 42px; height: 30px; }
.nav-menu { margin-left: 42px; }

.page { display: flow-root; }
.title { margin: 0; height: 72px; line-height: 72px; text-align: center; font-family: "DejaVu Serif", serif; font-weight: 700; font-size: 60px; color: #000; }
.rule { height: 5px; margin: 0 13px; border: 0; border-top: 3px solid #6c6c6c; border-bottom: 2px solid #c4c4c4; background: #999; }
.rule-top { margin-top: 40px; }
.rule-bottom { margin-top: 59px; width: auto; margin-right: 13px; }

.radios { display: flex; align-items: center; height: 64px; padding-left: 22px; font-family: "DejaVu Serif", serif; font-size: 30px; color: #111; }
.radio-item { display: flex; align-items: center; margin-right: 10px; }
.radio { appearance: none; -webkit-appearance: none; width: 26px; height: 26px; margin: 0 7px 0 0; border: 3px solid #8f8f9d; border-radius: 50%; background: #fff; flex: none; }
.radio:checked { border-color: #e95420; background: radial-gradient(circle, #e95420 0 6px, #fff 7px); }

.table-wrap { margin: 15px 0 0 13px; overflow: hidden; width: 3665px; }
.grid { border-collapse: collapse; table-layout: fixed; width: 3880px; font-family: "DejaVu Sans Mono", monospace; font-size: 22.5px; color: #222; }
.grid th, .grid td { border: 2px solid #dcdcdc; padding: 0 5px; text-align: right; white-space: nowrap; overflow: hidden; }
.grid th { font-weight: 400; background: #fafafa; height: 56px; }
.grid td { height: 56.3px; padding-top: 2px; }
.grid th:nth-child(1) { width: 56px; }
.grid th:nth-child(2) { width: 118px; }
.grid th:nth-child(3) { width: 241px; }
.grid th:nth-child(4) { width: 144px; }
.grid th:nth-child(5) { width: 172px; }
.grid th:nth-child(6) { width: 551px; }
.grid th:nth-child(7) { width: 240px; }
.grid th:nth-child(8) { width: 199px; }
.grid th:nth-child(9) { width: 266px; }
.grid th:nth-child(10) { width: 266px; }
.grid th:nth-child(11) { width: 118px; }
.grid th:nth-child(12) { width: 228px; }
.grid th:nth-child(13) { width: 211px; }
.grid th:nth-child(14) { width: 240px; }
.grid th:nth-child(15) { width: 225px; }
.grid th:nth-child(16) { width: 240px; }
.grid th:nth-child(17) { width: 365px; }
.th { display: flex; justify-content: space-between; align-items: center; }
.th-last { justify-content: flex-start; gap: 3px; }
.sort { display: block; width: 12px; height: 24px; margin-left: -1px; flex: none; background: #b9b9b9; clip-path: polygon(50% 0, 100% 40%, 0 40%, 0 56%, 100% 56%, 50% 100%, 0 56%, 0 40%); }
.fl { display: flex; align-items: center; gap: 2px; margin-left: -1px; }
.aa { display: block; width: 33px; height: 29px; border: 2px solid #fbe3ea; border-radius: 4px; font: 400 18px/25px "Liberation Sans", sans-serif; text-align: center; color: #fbe3ea; flex: none; }
.ph { color: #9a9a9a; font-size: 20px; }
.grid td.sel { padding: 0 0 0 13px; text-align: left; }
.sel .radio { display: block; margin: 0; width: 28px; height: 28px; }

.pager { display: flex; align-items: center; justify-content: flex-end; height: 49px; margin-top: 11px; padding-right: 24px; font-family: "DejaVu Sans Mono", monospace; font-size: 22px; color: #222; }
.pg { display: flex; align-items: center; justify-content: center; height: 49px; padding: 0; border: 0; background: #e8e8ee; }
.pg.off { background: #f3f3f6; }
.pg svg { height: 16px; }
.pg-first { width: 39px; margin-right: 19px; }
.pg-first svg, .pg-last svg { width: 20px; }
.pg-prev { width: 32px; margin-right: 9px; }
.pg-prev svg, .pg-next svg { width: 12px; }
.pg-current { width: 90px; height: 50px; line-height: 54px; text-align: center; border-bottom: 2px solid #ccc; color: #7a7a7a; }
.pg-sep { margin-left: 7px; width: 27px; }
.pg-total { margin-left: 10px; margin-right: 20px; }
.pg-next { width: 31px; margin-right: 18px; }
.pg-last { width: 42px; }

.charts { display: flex; margin-top: 15px; height: 633px; }
.pie { width: 764px; height: 633px; flex: none; display: block; font-family: "Liberation Sans", sans-serif; }
.pie-title { font-size: 31.7px; fill: #2a3f5f; }
.pie-in, .pie-out { font-size: 22px; text-anchor: middle; }
.pie-in { fill: #444; }
.pie-in-w { fill: #fff; }
.pie-out { fill: #3d4f6d; }
.pie-left { text-anchor: start; }
.lead { fill: none; stroke: #2a3f5f; stroke-width: 2; }
.lg { font-size: 22.2px; fill: #3d4f6d; }

.map-wrap { position: relative; width: 1874px; height: 633px; flex: none; }
.map { display: block; width: 1874px; height: 633px; font-family: "Open Sans", sans-serif; }
.map path { vector-effect: non-scaling-stroke; }
.rd-o, .rd-p, .rd-y, .rd-g, .rd-l, .rv, .rv-l, .bd, .rl, .rd-b { fill: none; stroke-linejoin: round; }
.rd-o { stroke: #f79d7c; stroke-width: 3; }
.rd-p { stroke: #e76a8c; stroke-width: 3; }
.rd-y { stroke: #f6c581; stroke-width: 3; }
.rd-g { stroke: #bdbbb5; stroke-width: 1.4; }
.rd-l { stroke: #cfcdc7; stroke-width: 1; }
.rd-b { stroke: #c08a76; stroke-width: 3; }
.rl { stroke: #8b8a86; stroke-width: 1.5; }
.rv { stroke: #a5d2e2; stroke-width: 2.2; }
.rv-l { stroke: #d5e6ea; stroke-width: 1.2; }
.bd { stroke: #c6afca; stroke-width: 1.6; stroke-dasharray: 14 4 3 4; }
.m-water { fill: #aad3df; }
.m-urban { fill: #dedcd8; }
.m-park { fill: #dcebc6; }
.m-forest { fill: #dfecd0; stroke: #a8cfa0; stroke-width: 4; }
.m-hatch { fill: url(#hatch); stroke: #f3c2ba; stroke-width: 1; }
.shield { fill: #e8ccd3; stroke: #d49cac; stroke-width: 1.5; }
.shield-t { font-size: 20px; fill: #7a2a40; text-anchor: middle; }
.m-place { font-size: 19px; fill: #333; text-anchor: middle; paint-order: stroke; stroke: #f2efe9; stroke-width: 2px; }
.m-county { font-size: 18px; font-style: italic; fill: #a585b5; text-anchor: middle; }
.m-wild { font-size: 18px; font-style: italic; fill: #2c8c2c; text-anchor: middle; }

.zoomctl { position: absolute; left: 21px; top: 21px; width: 59px; height: 117px; border: 3px solid #bdbdbd; border-radius: 5px; background: #fff; display: flex; flex-direction: column; overflow: hidden; }
.zoom-b { flex: 1; border: 0; padding: 0; background: #fff; font: 700 42px/1 "Liberation Sans", sans-serif; color: #000; }
.zoom-in { border-bottom: 2px solid #ccc; }

.vscroll { position: absolute; left: 3678px; top: 465px; width: 8px; height: 1083px; background: #555; border-radius: 3px; }
.hscroll { position: absolute; left: 4px; top: 1790px; width: 3435px; height: 11px; background: #444; border-radius: 5px; }

.bubble { position: absolute; left: 3501px; top: 1622px; width: 118px; height: 118px; border-radius: 50%; background: #119dff; }
.bubble-chev { position: absolute; left: 73px; top: 26px; width: 27px; height: 62px; }
.badge { position: absolute; left: 3567px; top: 1616px; width: 64px; height: 39px; border-radius: 20px; background: #fff; box-shadow: 0 0 4px rgba(0,0,0,.15); display: flex; align-items: center; justify-content: center; gap: 9px; font: 700 18px "DejaVu Sans", sans-serif; color: #777; }
.badge-dot { width: 16px; height: 16px; border-radius: 50%; background: #e0243e; }

.tray { position: absolute; left: 3269px; top: 1662px; width: 312px; height: 132px; padding: 5px; display: flex; flex-wrap: wrap; align-content: flex-start; border-radius: 12px; border: 1px solid #aaa; background: radial-gradient(ellipse 190px 130px at 100% 25%, #0e3f66 0, rgba(14,63,102,.55) 55%, rgba(14,63,102,0) 100%), #343434; box-shadow: 0 4px 14px rgba(0,0,0,.35); }
.tray-cell { width: 60px; height: 60px; display: flex; align-items: center; justify-content: center; border-radius: 8px; }
.tray-on { background: #454545; }
.tray-ico { width: 24px; height: 24px; }
.tray-bt { width: 18px; }
```
